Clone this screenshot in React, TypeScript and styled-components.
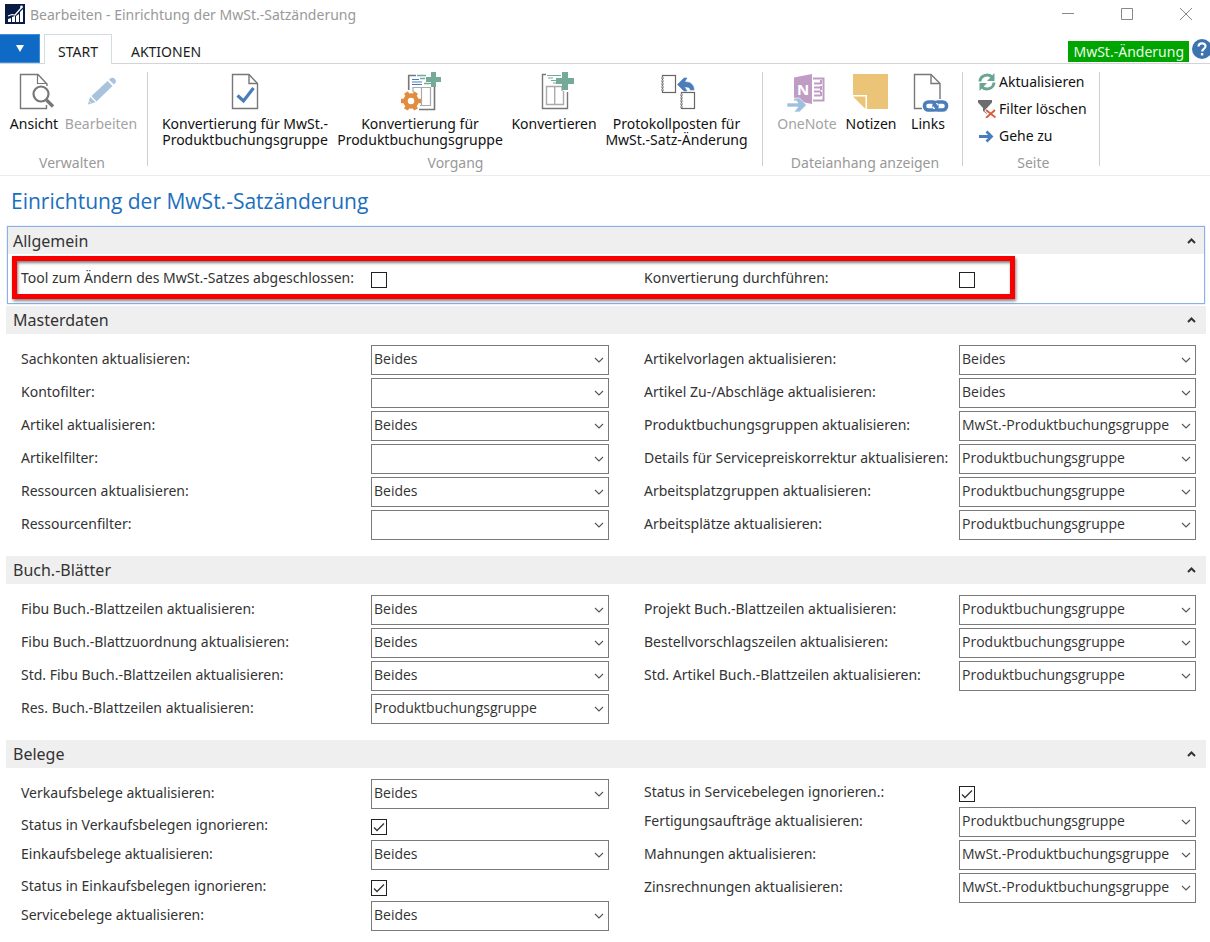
import React, { useId, useState } from "react";
import styled, { createGlobalStyle } from "styled-components";

const GlobalStyle = createGlobalStyle`
  *, *::before, *::after { box-sizing: border-box; }
  body {
    margin: 0;
    background: #fff;
    color: #333;
    font-family: "Noto Sans", "Open Sans", sans-serif;
    font-size: 14px;
  }
  button, select, input { font: inherit; color: inherit; }
  h1, h2 { margin: 0; font-weight: 400; }
`;

const Shell = styled.div`
  overflow: hidden;
  padding-bottom: 11px;
`;

/* ---------- title bar ---------- */

const TitleBar = styled.header`
  display: flex;
  align-items: center;
  height: 34px;
  padding: 0 18px 6px 5px;
  color: #999;
`;

const WindowTitle = styled.span`
  flex: 1;
  margin-left: 5px;
  white-space: nowrap;
`;

const WindowControls = styled.div`
  display: flex;
  gap: 47px;
`;

const WindowButton = styled.button`
  display: flex;
  padding: 0;
  border: 0;
  background: none;
`;

/* ---------- tabs ---------- */

const TabRow = styled.nav`
  display: flex;
  height: 30px;
  border-bottom: 1px solid #d2d4d6;
`;

const FileMenuButton = styled.button`
  display: flex;
  align-items: center;
  justify-content: center;
  width: 40px;
  height: 29px;
  margin-right: 4px;
  padding: 0;
  border: 1px solid #3d8edb;
  border-left: 0;
  background: #0f6ac6;
`;

const Tab = styled.button<{ $active?: boolean }>`
  height: 30px;
  padding: 4px ${(p) => (p.$active ? 13 : 18)}px 0;
  border: 1px solid ${(p) => (p.$active ? "#d2dde0" : "transparent")};
  border-bottom: 0;
  background: ${(p) => (p.$active ? "#fff" : "transparent")};
  color: #1c1c1c;
`;

const TabRowEnd = styled.div`
  display: flex;
  align-items: flex-end;
  gap: 3px;
  margin-left: auto;
  margin-right: -2px;
`;

const CompanyBadge = styled.span`
  height: 21px;
  margin-bottom: 1px;
  padding: 0 5px;
  background: #00a500;
  color: #e9fbe9;
  line-height: 21px;
  white-space: nowrap;
`;

const HelpButton = styled.button`
  display: flex;
  align-self: flex-start;
  margin-top: 5px;
  padding: 0;
  border: 0;
  background: none;
`;

/* ---------- ribbon ---------- */

const Ribbon = styled.div`
  display: flex;
  padding: 8px 0 2px;
  border-bottom: 1px solid #ececec;
`;

const RibbonGroup = styled.section<{ $inset: number; $end: number }>`
  display: flex;
  flex-direction: column;
  flex: none;
  padding: 0 ${(p) => p.$end}px 0 ${(p) => p.$inset}px;
`;

const RibbonItems = styled.div<{ $stacked?: boolean }>`
  display: flex;
  flex-direction: ${(p) => (p.$stacked ? "column" : "row")};
  gap: ${(p) => (p.$stacked ? 7 : 0)}px;
  height: 81px;
`;

const RibbonCaption = styled.span`
  padding-left: 2px;
  color: #999;
  line-height: 20px;
  text-align: center;
`;

const RibbonDivider = styled.div`
  flex: none;
  width: 1px;
  height: 94px;
  background: #cfcfcf;
`;

const LargeButton = styled.button<{ $width: number }>`
  display: flex;
  flex-direction: column;
  align-items: center;
  gap: 4px;
  width: ${(p) => p.$width}px;
  padding: 0;
  border: 0;
  background: none;
  color: #111;
  line-height: 16px;
  white-space: pre;

  &:disabled { color: #a3a3a3; }
  svg { overflow: visible; }
`;

const SmallButton = styled.button`
  display: flex;
  align-items: center;
  gap: 3px;
  height: 20px;
  padding: 0;
  border: 0;
  background: none;
  color: #111;
  line-height: 20px;
  white-space: nowrap;
`;

/* ---------- page ---------- */

const Page = styled.main`
  padding: 11px 4px 0 6px;
`;

const PageTitle = styled.h1`
  margin: 0 5px 11px;
  color: #1b6fbe;
  font-family: "Open Sans", "Noto Sans", sans-serif;
  font-size: 21px;
  line-height: 28px;
`;

const FastTab = styled.section<{ $focused?: boolean }>`
  position: relative;
  ${(p) =>
    p.$focused &&
    `
    margin: 0 1px 2px;
    border: 1px solid #8db0e6;
    box-shadow: 0 0 1px #8db0e6;
  `}
`;

const FastTabHeader = styled.button<{ $focused?: boolean }>`
  display: flex;
  align-items: center;
  justify-content: space-between;
  width: 100%;
  height: ${(p) => (p.$focused ? 27 : 28)}px;
  padding: 0 ${(p) => (p.$focused ? 8 : 10)}px 0 ${(p) => (p.$focused ? 5 : 7)}px;
  border: 0;
  background: #efefef;
  font-size: 16px;
  line-height: 26px;
  text-align: left;
`;

const FieldGrid = styled.div<{ $focused?: boolean }>`
  display: grid;
  grid-template-columns: 588fr 552fr;
  column-gap: 35px;
  padding: ${(p) => (p.$focused ? "11px 8px 13px 13px" : "11px 10px 16px 15px")};
`;

const FieldColumn = styled.div`
  display: flex;
  flex-direction: column;
  gap: 3px;
  min-width: 0;
`;

const FieldRow = styled.div<{ $label: number; $check?: boolean }>`
  display: grid;
  grid-template-columns: ${(p) => p.$label}px minmax(0, 1fr);
  height: ${(p) => (p.$check ? 25 : 30)}px;
`;

const FieldLabel = styled.label<{ $check?: boolean }>`
  padding-top: ${(p) => (p.$check ? 3 : 4)}px;
  line-height: 20px;
  white-space: nowrap;
`;

const SelectBox = styled.div`
  display: grid;
  align-items: center;
  height: 30px;

  > * { grid-area: 1 / 1; }
  > svg { justify-self: end; margin-right: 5px; pointer-events: none; }
`;

const Select = styled.select`
  width: 100%;
  height: 30px;
  padding: 0 18px 3px 2px;
  border: 1px solid #7a7a7a;
  border-radius: 0;
  appearance: none;
  background: #fff;
  font-family: "Open Sans", "Noto Sans", sans-serif;
`;

const CheckBox = styled.span`
  display: grid;
  width: 16px;
  height: 16px;
  margin-top: 7px;

  > * { grid-area: 1 / 1; }
  > svg { visibility: hidden; pointer-events: none; }
  > input:checked + svg { visibility: visible; }
`;

const CheckInput = styled.input`
  width: 16px;
  height: 16px;
  margin: 0;
  border: 1px solid #222;
  appearance: none;
  background: #fff;
`;

/* red frame drawn over the two switches of the first tab */
const Highlight = styled.div`
  position: absolute;
  top: 29px;
  left: 4px;
  right: 189px;
  height: 43px;
  border: 5px solid #f80000;
  box-shadow: 1px 2px 3px rgba(0, 0, 0, 0.5), inset 1px 2px 3px rgba(0, 0, 0, 0.5);
  pointer-events: none;
`;

/* ---------- icons ---------- */

const Large = ({ children }: { children: React.ReactNode }) => (
  <svg width="40" height="40" viewBox="0 0 40 40" fill="none" aria-hidden="true">
    {children}
  </svg>
);

const AppIcon = () => (
  <svg width="20" height="20" viewBox="0 0 20 20" aria-hidden="true">
    <rect width="20" height="20" fill="#071b45" />
    <path d="M3 15l3-1v4H3zM7 13l3-1v6H7zM11 12l3-2v8h-3zM15 8l3-3v13h-3z" fill="#fff" />
    <path d="M3 12l4-1.500 3 .5 7-8" stroke="#fff" strokeWidth="1.200" fill="none" />
    <circle cx="16.500" cy="3" r="1.400" fill="#fff" />
  </svg>
);

const ViewIcon = () => (
  <Large>
    <path d="M33 14V12L24 2.500H6.500V36.500H32.500V33" stroke="#777" strokeWidth="1.4" />
    <path d="M23.500 2.500V11.500H32" stroke="#777" strokeWidth="1.2" />
    <circle cx="27" cy="22" r="9.500" fill="#fff" />
    <circle cx="27" cy="22" r="7.500" stroke="#777" strokeWidth="2.2" />
    <path d="M32.500 28l6.500 6.500" stroke="#777" strokeWidth="3.400" />
  </Large>
);

const PencilIcon = () => (
  <Large>
    <path d="M7 32.500l2-7.500 5.500 5.300z" fill="#a9c3dc" />
    <path d="M10.500 24L26.500 9l5 5L15.500 29.500z" fill="#a9c3dc" />
    <path d="M28 7.800l1.800-1.800q2.200-1 4 .8t.8 4L33 12.500z" fill="#a9c3dc" />
    <path d="M8.500 29.500l1.700 1.600" stroke="#fff" strokeWidth=".8" />
  </Large>
);

const DocCheckIcon = () => (
  <Large>
    <path d="M7.500 2.500H24l8.500 9V36.500H7.500z" stroke="#777" strokeWidth="1.4" />
    <path d="M24 2.500V11.500H32.500" stroke="#777" strokeWidth="1.4" />
    <path d="M12.500 23.500l6 5.500L28.500 16" stroke="#4a7ebb" strokeWidth="3.200" />
  </Large>
);

const GearSheetIcon = () => (
  <Large>
    <path d="M16 3.500H8.700V18M34.500 15V37.500H19" stroke="#777" strokeWidth="1.600" />
    <path d="M17 3.500h9M20 6.500h5M24 11.500h8" stroke="#74ab98" strokeWidth="1.400" />
    <path d="M12 7.500h7M12 10h10M12 12.500h10" stroke="#4a7ebb" strokeWidth="1.200" />
    <path d="M13 20V15.500H30.500V33.500H20M21.500 15.500V33" stroke="#aaa" strokeWidth="1.200" />
    <path d="M31 0h5v5h5v5h-5v5h-5v-5h-5V5h5z" fill="#74ab98" />
    <circle cx="11" cy="29" r="9" fill="#fff" />
    <circle cx="11" cy="29" r="5.500" stroke="#e38b3f" strokeWidth="4.500" />
    <g stroke="#e38b3f" strokeWidth="4.500">
      <path d="M1 29h4M17 29h4M6 20.500l2 3.400M14 34l2 3.500M16 20.500l-2 3.400M8 34l-2 3.500" />
    </g>
  </Large>
);

const SheetPlusIcon = () => (
  <Large>
    <path d="M12 2.500H8.500V36.500H33.500V20" stroke="#777" strokeWidth="1.400" />
    <path d="M13 3.500h14M14 6h5M17 8.500h7M19 11h4" stroke="#74ab98" strokeWidth="1.200" />
    <path d="M28 19V14.500H12.500V32.500H29.500V19M20.700 14.500V32.500" stroke="#aaa" strokeWidth="1.400" />
    <path d="M28 0h6v6h6v6h-6v6h-6v-6h-6V6h6z" fill="#74ab98" />
  </Large>
);

const LogTransferIcon = () => (
  <Large>
    <rect x="5.500" y="3.500" width="13" height="17" stroke="#666" strokeWidth="1.200" />
    <rect x="24.500" y="20.500" width="13" height="16" stroke="#666" strokeWidth="1.200" />
    <path d="M5.500 5V20M24.500 22V36" stroke="#fff" strokeWidth="2" strokeDasharray="1.500 1.500" />
    <path d="M4 6h3M4 9h3M4 12h3M4 15h3M4 18h3M23 23h3M23 26h3M23 29h3M23 32h3M23 35h3" stroke="#777" />
    <path d="M20.500 12.500L27 6h3l-2.500 4c6-.5 9.500 3 9.500 8h-3.500c-.5-2.500-2.500-3.500-6-3L30 19h-3z" fill="#4a7ebb" stroke="#4a7ebb" strokeWidth=".6" />
  </Large>
);

const OneNoteIcon = () => (
  <Large>
    <path d="M7 5.500L25 2v30L7 28.500z" fill="#bf9cc4" />
    <path d="M26 6.500H36.500V28.500H26" stroke="#bf9cc4" strokeWidth="2" />
    <path d="M27 11.500h7M27 15.500h7M27 19.500h7M27 23.500h7" stroke="#bf9cc4" strokeWidth="1.800" />
    <path d="M34 8v4M34 14v4M34 20v4" stroke="#bf9cc4" strokeWidth="2" />
    <text x="10" y="23" fill="#fff" fontSize="15" fontWeight="700">N</text>
    <path d="M0 31h11l-4-5h5.500l7 7-7 7H7l4-5H0z" fill="#9ebfdd" stroke="#fff" strokeWidth=".6" />
  </Large>
);

const NoteIcon = () => (
  <Large>
    <path d="M2 2H37V37H16V23H2z" fill="#ebc477" />
    <path d="M2 24.500H14.500V37z" fill="#ebc477" />
  </Large>
);

const LinksIcon = () => (
  <Large>
    <path d="M14 36.500H6.500V2.500H23l9 9V27" stroke="#777" strokeWidth="1.400" />
    <path d="M23 2.500V11.500H32" stroke="#777" strokeWidth="1.400" />
    <rect x="14" y="27" width="27" height="13" rx="6" fill="#fff" />
    <rect x="16.500" y="30" width="12.500" height="8" rx="3.800" stroke="#4a7ebb" strokeWidth="3.600" />
    <rect x="26" y="30" width="12.500" height="8" rx="3.800" stroke="#4a7ebb" strokeWidth="3.600" />
    <path d="M25 34.500q0 2 2 2M30 33.500q0-2-2-2" stroke="#fff" strokeWidth="1.200" />
  </Large>
);

const RefreshIcon = () => (
  <svg width="18" height="18" viewBox="0 0 18 18" fill="none" aria-hidden="true">
    <path d="M2 8.500C2.500 1.500 11 .5 14.500 4.500M16 9.500c-.5 7-9 8-12.500 4" stroke="#6aa58f" strokeWidth="3" />
    <path d="M16.500 0v8H9zM1.500 18v-8H9z" fill="#6aa58f" />
  </svg>
);

const ClearFilterIcon = () => (
  <svg width="18" height="18" viewBox="0 0 18 18" fill="none" aria-hidden="true">
    <path d="M0 0h14v2.500L9 8v6L5 11V8L0 2.500z" fill="#6d6d6d" />
    <path d="M7.500 9.500l10 8M17.500 9.500l-10 8" stroke="#fff" strokeWidth="4" />
    <path d="M8 10l9.500 7.500M17 10l-9 8" stroke="#d9593a" strokeWidth="1.800" />
  </svg>
);

const GoToIcon = () => (
  <svg width="18" height="18" viewBox="0 0 18 18" fill="none" aria-hidden="true">
    <path d="M1 9.500h12M8.500 4.500l5 5-5 5" stroke="#4a7ebb" strokeWidth="2.800" />
  </svg>
);

const HelpIcon = () => (
  <svg width="20" height="20" viewBox="0 0 20 20" fill="none" aria-hidden="true">
    <circle cx="10" cy="10" r="10" fill="#3c74b0" />
    <path d="M6.500 7.500c.2-4.500 7.300-4 7 0-.2 2.300-3.400 2.500-3.400 5" stroke="#fff" strokeWidth="2.200" />
    <rect x="8.900" y="14" width="2.400" height="2.400" fill="#fff" />
  </svg>
);

const DropArrow = () => (
  <svg width="10" height="6" viewBox="0 0 10 6" fill="none" aria-hidden="true">
    <path d="M1 1l4 4 4-4" stroke="#555" strokeWidth="1.100" />
  </svg>
);

const CollapseArrow = ({ open }: { open: boolean }) => (
  <svg width="9" height="6" viewBox="0 0 9 6" fill="none" aria-hidden="true">
    <path d={open ? "M1 5l3.500-3.500L8 5" : "M1 1l3.500 3.500L8 1"} stroke="#333" strokeWidth="2" />
  </svg>
);

const Tick = () => (
  <svg width="16" height="16" viewBox="0 0 16 16" fill="none" aria-hidden="true">
    <path d="M3 8.500l3 3L13 4.500" stroke="#333" strokeWidth="1.300" />
  </svg>
);

/* ---------- data ---------- */

type Field = { label: string; value: string | boolean };
type TabData = { title: string; focused?: boolean; left: Field[]; right: Field[] };

const BOTH = "Beides";
const PROD = "Produktbuchungsgruppe";
const VAT = "MwSt.-Produktbuchungsgruppe";
const OPTIONS = ["", BOTH, PROD, VAT];

const TABS: TabData[] = [
  {
    title: "Allgemein",
    focused: true,
    left: [{ label: "Tool zum Ändern des MwSt.-Satzes abgeschlossen:", value: false }],
    right: [{ label: "Konvertierung durchführen:", value: false }],
  },
  {
    title: "Masterdaten",
    left: [
      { label: "Sachkonten aktualisieren:", value: BOTH },
      { label: "Kontofilter:", value: "" },
      { label: "Artikel aktualisieren:", value: BOTH },
      { label: "Artikelfilter:", value: "" },
      { label: "Ressourcen aktualisieren:", value: BOTH },
      { label: "Ressourcenfilter:", value: "" },
    ],
    right: [
      { label: "Artikelvorlagen aktualisieren:", value: BOTH },
      { label: "Artikel Zu-/Abschläge aktualisieren:", value: BOTH },
      { label: "Produktbuchungsgruppen aktualisieren:", value: VAT },
      { label: "Details für Servicepreiskorrektur aktualisieren:", value: PROD },
      { label: "Arbeitsplatzgruppen aktualisieren:", value: PROD },
      { label: "Arbeitsplätze aktualisieren:", value: PROD },
    ],
  },
  {
    title: "Buch.-Blätter",
    left: [
      { label: "Fibu Buch.-Blattzeilen aktualisieren:", value: BOTH },
      { label: "Fibu Buch.-Blattzuordnung aktualisieren:", value: BOTH },
      { label: "Std. Fibu Buch.-Blattzeilen aktualisieren:", value: BOTH },
      { label: "Res. Buch.-Blattzeilen aktualisieren:", value: PROD },
    ],
    right: [
      { label: "Projekt Buch.-Blattzeilen aktualisieren:", value: PROD },
      { label: "Bestellvorschlagszeilen aktualisieren:", value: PROD },
      { label: "Std. Artikel Buch.-Blattzeilen aktualisieren:", value: PROD },
    ],
  },
  {
    title: "Belege",
    left: [
      { label: "Verkaufsbelege aktualisieren:", value: BOTH },
      { label: "Status in Verkaufsbelegen ignorieren:", value: true },
      { label: "Einkaufsbelege aktualisieren:", value: BOTH },
      { label: "Status in Einkaufsbelegen ignorieren:", value: true },
      { label: "Servicebelege aktualisieren:", value: BOTH },
    ],
    right: [
      { label: "Status in Servicebelegen ignorieren.:", value: true },
      { label: "Fertigungsaufträge aktualisieren:", value: PROD },
      { label: "Mahnungen aktualisieren:", value: VAT },
      { label: "Zinsrechnungen aktualisieren:", value: VAT },
    ],
  },
];

/* ---------- components ---------- */

function FieldItem({ field, labelWidth }: { field: Field; labelWidth: number }) {
  const id = useId();
  const { label, value } = field;
  const check = typeof value === "boolean";
  return (
    <FieldRow $label={labelWidth} $check={check}>
      <FieldLabel htmlFor={id} $check={check}>{label}</FieldLabel>
      {typeof value === "boolean" ? (
        <CheckBox>
          <CheckInput id={id} type="checkbox" defaultChecked={value} />
          <Tick />
        </CheckBox>
      ) : (
        <SelectBox>
          <Select id={id} defaultValue={value}>
            {OPTIONS.map((o) => (
              <option key={o} value={o}>{o}</option>
            ))}
          </Select>
          <DropArrow />
        </SelectBox>
      )}
    </FieldRow>
  );
}

function FastTabPanel({ title, focused, left, right }: TabData) {
  const [open, setOpen] = useState(true);
  return (
    <FastTab $focused={focused}>
      <h2>
        <FastTabHeader $focused={focused} aria-expanded={open} onClick={() => setOpen(!open)}>
          {title}
          <CollapseArrow open={open} />
        </FastTabHeader>
      </h2>
      {open && (
        <FieldGrid $focused={focused}>
          <FieldColumn>
            {left.map((f) => <FieldItem key={f.label} field={f} labelWidth={350} />)}
          </FieldColumn>
          <FieldColumn>
            {right.map((f) => <FieldItem key={f.label} field={f} labelWidth={315} />)}
          </FieldColumn>
        </FieldGrid>
      )}
      {open && focused && <Highlight />}
    </FastTab>
  );
}

export default function App() {
  return (
    <Shell>
      <GlobalStyle />
      <TitleBar>
        <AppIcon />
        <WindowTitle>Bearbeiten - Einrichtung der MwSt.-Satzänderung</WindowTitle>
        <WindowControls>
          <WindowButton aria-label="Minimieren">
            <svg width="12" height="12" viewBox="0 0 12 12"><path d="M0 5.500h12" stroke="#888" /></svg>
          </WindowButton>
          <WindowButton aria-label="Maximieren">
            <svg width="12" height="12" viewBox="0 0 12 12"><path d="M.5.5h11v11H.5z" stroke="#888" fill="none" /></svg>
          </WindowButton>
          <WindowButton aria-label="Schließen">
            <svg width="12" height="12" viewBox="0 0 12 12"><path d="M0 0l12 12M12 0L0 12" stroke="#888" /></svg>
          </WindowButton>
        </WindowControls>
      </TitleBar>

      <TabRow>
        <FileMenuButton aria-label="Menü">
          <svg width="8" height="7" viewBox="0 0 8 7"><path d="M0 0h8L4 7z" fill="#fff" /></svg>
        </FileMenuButton>
        <Tab $active>START</Tab>
        <Tab>AKTIONEN</Tab>
        <TabRowEnd>
          <CompanyBadge>MwSt.-Änderung</CompanyBadge>
          <HelpButton aria-label="Hilfe"><HelpIcon /></HelpButton>
        </TabRowEnd>
      </TabRow>

      <Ribbon>
        <RibbonGroup $inset={4} $end={9}>
          <RibbonItems>
            <LargeButton $width={60}><ViewIcon />Ansicht</LargeButton>
            <LargeButton $width={74} disabled><PencilIcon />Bearbeiten</LargeButton>
          </RibbonItems>
          <RibbonCaption>Verwalten</RibbonCaption>
        </RibbonGroup>
        <RibbonDivider />
        <RibbonGroup $inset={9} $end={10}>
          <RibbonItems>
            <LargeButton $width={176}><DocCheckIcon />{"Konvertierung für MwSt.-\nProduktbuchungsgruppe"}</LargeButton>
            <LargeButton $width={174}><GearSheetIcon />{"Konvertierung für\nProduktbuchungsgruppe"}</LargeButton>
            <LargeButton $width={94}><SheetPlusIcon />Konvertieren</LargeButton>
            <LargeButton $width={151}><LogTransferIcon />{"Protokollposten für\nMwSt.-Satz-Änderung"}</LargeButton>
          </RibbonItems>
          <RibbonCaption>Vorgang</RibbonCaption>
        </RibbonGroup>
        <RibbonDivider />
        <RibbonGroup $inset={6} $end={3}>
          <RibbonItems>
            <LargeButton $width={76} disabled><OneNoteIcon />OneNote</LargeButton>
            <LargeButton $width={52}><NoteIcon />Notizen</LargeButton>
            <LargeButton $width={62}><LinksIcon />Links</LargeButton>
          </RibbonItems>
          <RibbonCaption>Dateianhang anzeigen</RibbonCaption>
        </RibbonGroup>
        <RibbonDivider />
        <RibbonGroup $inset={15} $end={12}>
          <RibbonItems $stacked>
            <SmallButton><RefreshIcon />Aktualisieren</SmallButton>
            <SmallButton><ClearFilterIcon />Filter löschen</SmallButton>
            <SmallButton><GoToIcon />Gehe zu</SmallButton>
          </RibbonItems>
          <RibbonCaption>Seite</RibbonCaption>
        </RibbonGroup>
        <RibbonDivider />
      </Ribbon>

      <Page>
        <PageTitle>Einrichtung der MwSt.-Satzänderung</PageTitle>
        {TABS.map((t) => <FastTabPanel key={t.title} {...t} />)}
      </Page>
    </Shell>
  );
}
